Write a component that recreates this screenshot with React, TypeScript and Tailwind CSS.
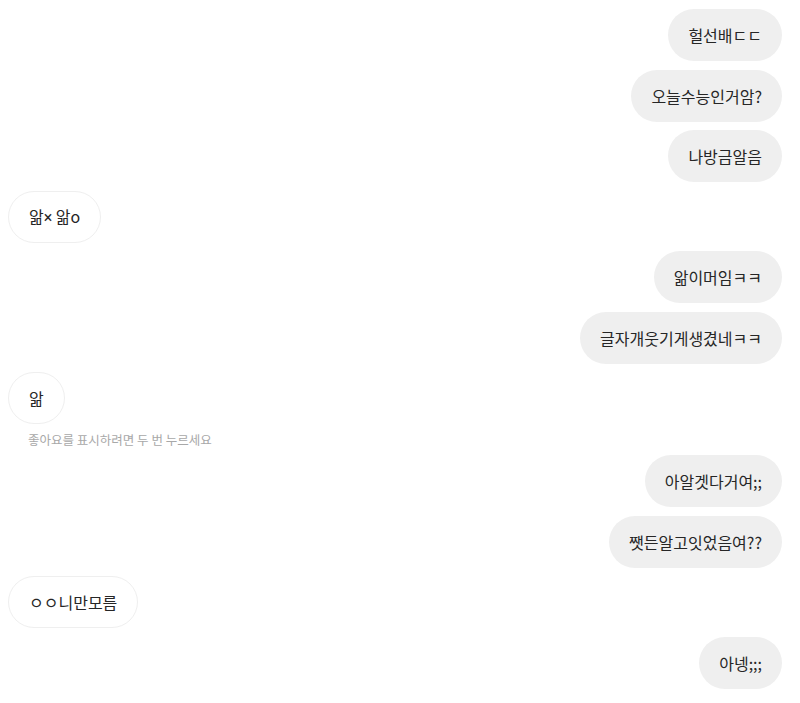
import React from "react";

type Message = {
  id: number;
  text: React.ReactNode;
  mine: boolean;
  hint?: string;
};

const messages: Message[] = [
  { id: 1, text: "헐선배ㄷㄷ", mine: true },
  { id: 2, text: "오늘수능인거암?", mine: true },
  { id: 3, text: "나방금알음", mine: true },
  {
    id: 4,
    text: (
      <>
        앎<span className="font-['Roboto']">×</span> 앎o
      </>
    ),
    mine: false,
  },
  { id: 5, text: "앎이머임ㅋㅋ", mine: true },
  { id: 6, text: "글자개웃기게생겼네ㅋㅋ", mine: true },
  { id: 7, text: "앎", mine: false, hint: "좋아요를 표시하려면 두 번 누르세요" },
  { id: 8, text: "아알겟다거여;;", mine: true },
  { id: 9, text: "쨋든알고잇었음여??", mine: true },
  { id: 10, text: "ㅇㅇ니만모름", mine: false },
  { id: 11, text: "아넹;;;", mine: true },
];

function Bubble({ message }: { message: Message }) {
  const base =
    "h-[52px] px-5 rounded-full flex items-center text-[16px] text-[#262626] whitespace-nowrap";
  return (
    <div className={message.mine ? "flex justify-end" : "flex justify-start"}>
      <div
        className={
          message.mine
            ? `${base} bg-[#efefef]`
            : `${base} bg-white border border-[#efefef]`
        }
      >
        <span>{message.text}</span>
      </div>
    </div>
  );
}

export default function App() {
  return (
    <div
      className="w-[800px] h-[703px] bg-white overflow-hidden pl-2 pr-[18px] pt-[9px] flex flex-col gap-[8.5px]"
      style={{ fontFamily: '"Noto Sans CJK KR", "Noto Sans", sans-serif' }}
    >
      {messages.map((m) => (
        <React.Fragment key={m.id}>
          <Bubble message={m} />
          {m.hint && (
            <div className="h-[14px] pl-5 text-[12.5px] leading-[14px] text-[#a8a8a8]">
              {m.hint}
            </div>
          )}
        </React.Fragment>
      ))}
    </div>
  );
}
